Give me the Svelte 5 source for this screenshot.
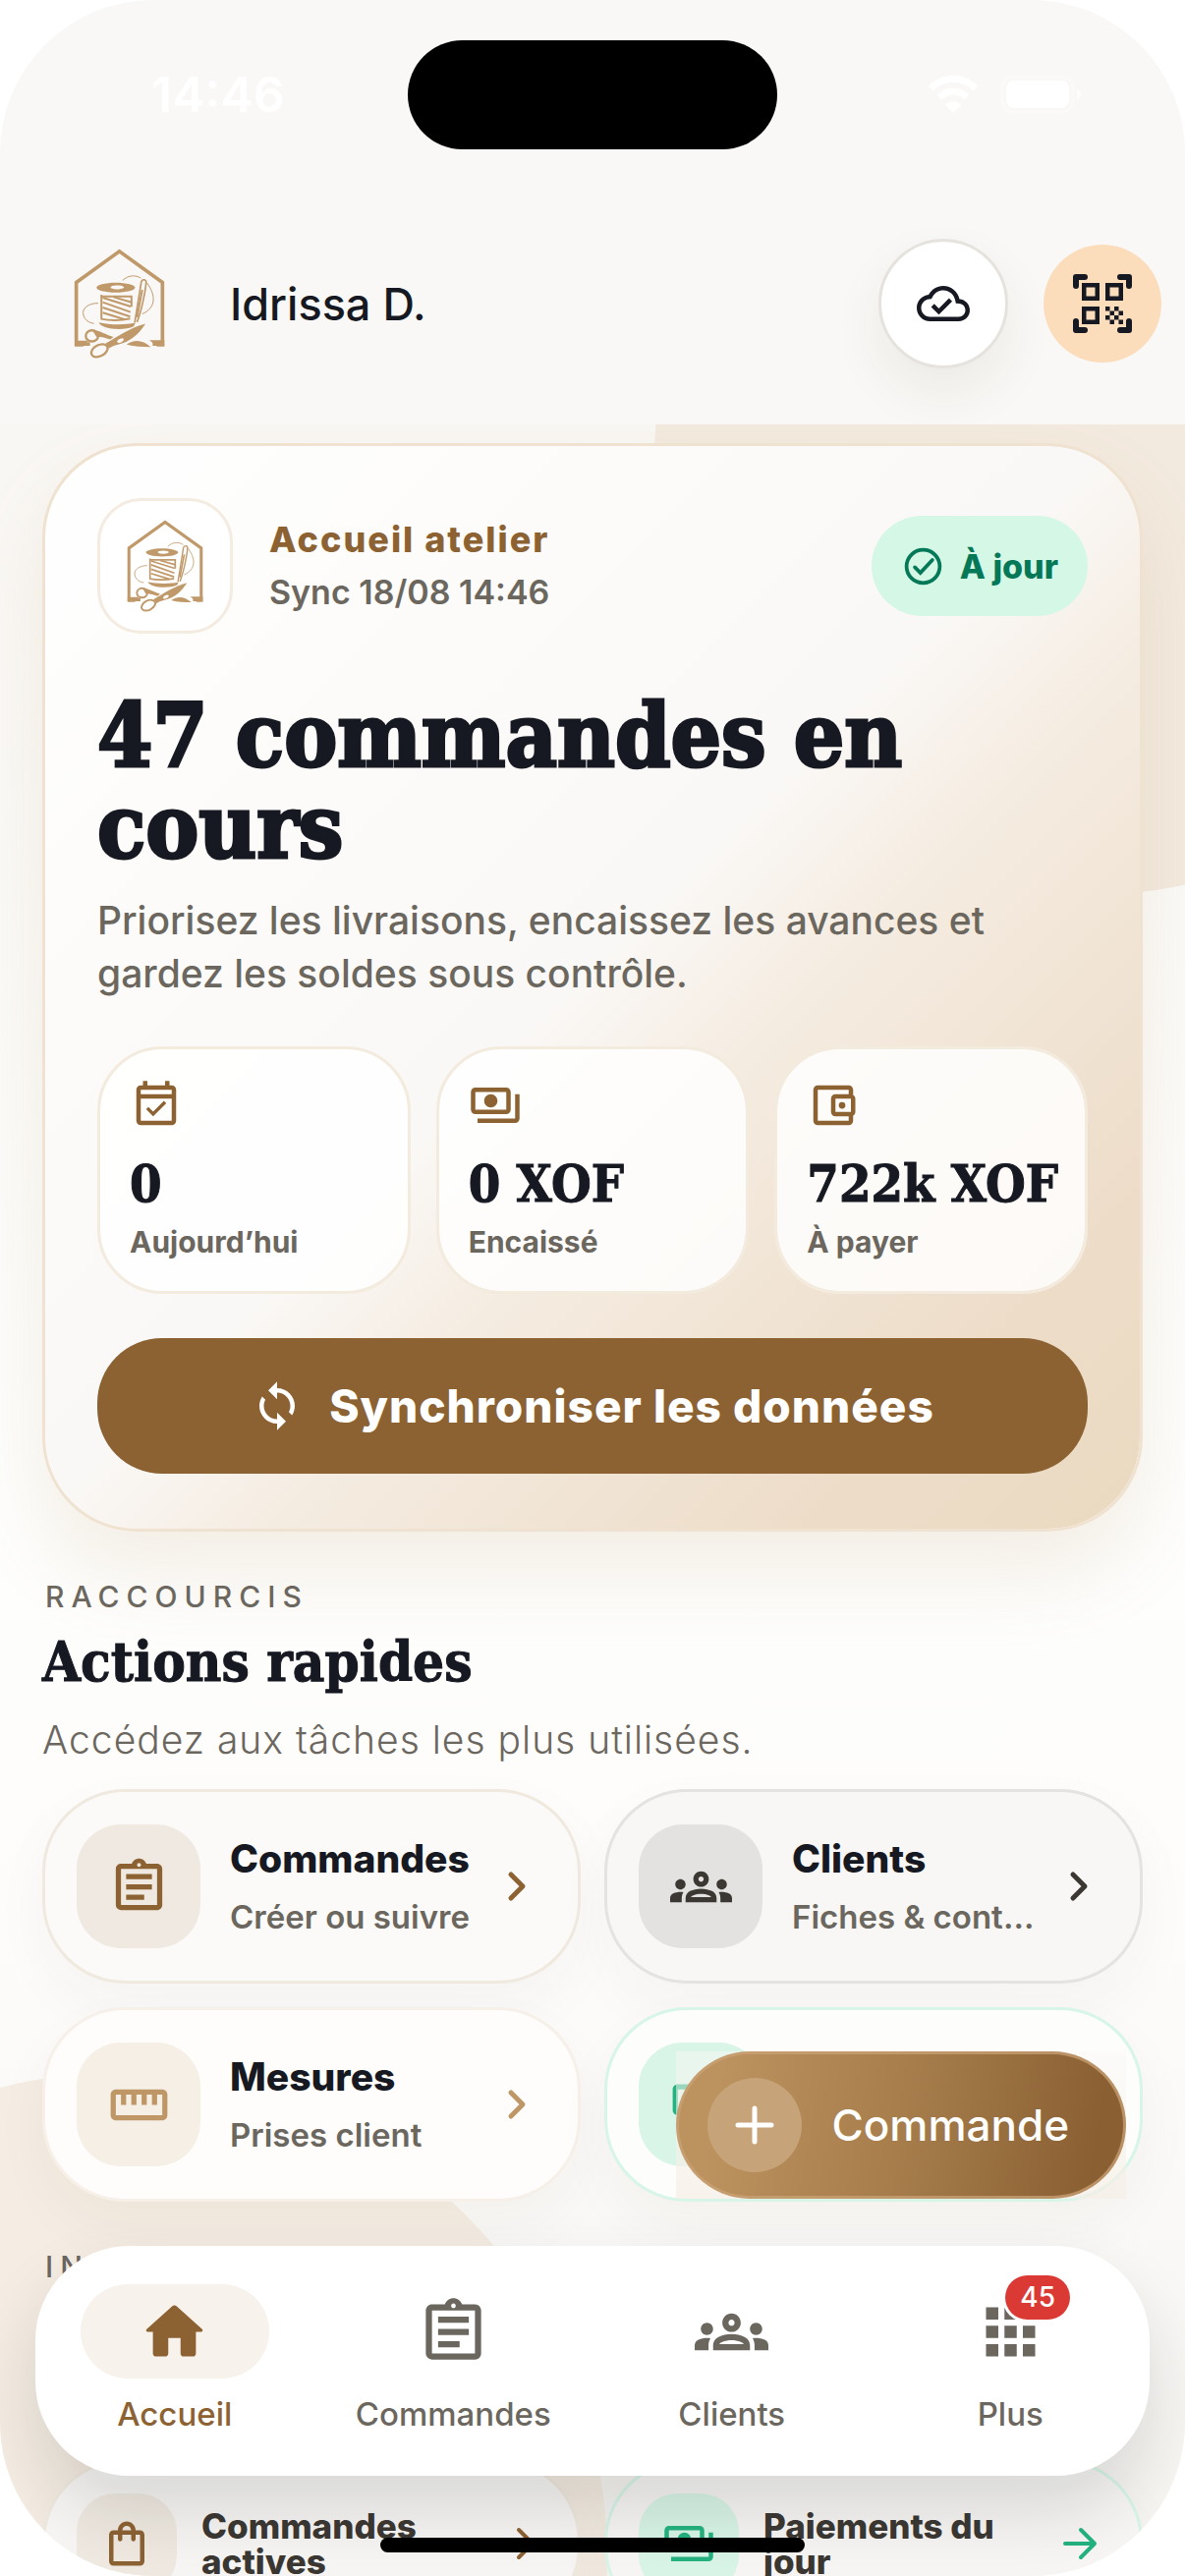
<script>
  const icons = {
    cloud: 'M19.35 10.04C18.67 6.59 15.64 4 12 4 9.11 4 6.6 5.64 5.35 8.04 2.34 8.36 0 10.91 0 14c0 3.31 2.69 6 6 6h13c2.76 0 5-2.24 5-5 0-2.64-2.05-4.78-4.65-4.96zM19 18H6c-2.21 0-4-1.79-4-4 0-2.05 1.53-3.76 3.56-3.97l1.07-.11.5-.95C8.08 7.14 9.94 6 12 6c2.62 0 4.88 1.86 5.39 4.43l.3 1.5 1.53.11c1.56.1 2.78 1.41 2.78 2.96 0 1.65-1.35 3-3 3zm-9-3.82l-2.09-2.09L6.5 13.5 10 17l6.01-6.01-1.41-1.41z',
    clipboard: 'M7 15h7v2H7zm0-4h10v2H7zm0-4h10v2H7zm12-4h-4.18C14.4 1.84 13.3 1 12 1c-1.3 0-2.4.84-2.82 2H5c-.14 0-.27.01-.4.04-.39.08-.74.28-1.01.55-.18.18-.33.4-.43.64-.1.23-.16.49-.16.77v14c0 .27.06.54.16.78s.25.45.43.64c.27.27.62.47 1.01.55.13.02.26.03.4.03h14c1.1 0 2-.9 2-2V5c0-1.1-.9-2-2-2zm-7-.25c.41 0 .75.34.75.75s-.34.75-.75.75-.75-.34-.75-.75.34-.75.75-.75zM19 19H5V5h14v14z',
    groups: 'M4 13c1.1 0 2-.9 2-2s-.9-2-2-2-2 .9-2 2 .9 2 2 2zM5.13 14.1C4.76 14.04 4.39 14 4 14c-.99 0-1.93.21-2.78.58C.48 14.9 0 15.62 0 16.43V18h4.5v-1.61c0-.83.23-1.61.63-2.29zM20 13c1.1 0 2-.9 2-2s-.9-2-2-2-2 .9-2 2 .9 2 2 2zM24 16.43c0-.81-.48-1.53-1.22-1.85C21.93 14.21 20.99 14 20 14c-.39 0-.76.04-1.13.1.4.68.63 1.46.63 2.29V18H24v-1.57zM16.24 13.65c-1.17-.52-2.61-.9-4.24-.9s-3.07.39-4.24.9C6.68 14.13 6 15.21 6 16.39V18h12v-1.61c0-1.18-.68-2.26-1.76-2.74zM8.07 16c.09-.23.13-.39.91-.69.97-.38 1.99-.56 3.02-.56s2.05.18 3.02.56c.77.3.81.46.91.69H8.07zM12 8c.55 0 1 .45 1 1s-.45 1-1 1-1-.45-1-1 .45-1 1-1m0-2c-1.66 0-3 1.34-3 3s1.34 3 3 3 3-1.34 3-3-1.34-3-3-3z',
    ruler: 'M21 6H3c-1.1 0-2 .9-2 2v8c0 1.1.9 2 2 2h18c1.1 0 2-.9 2-2V8c0-1.1-.9-2-2-2zm0 10H3V8h2v4h2V8h2v4h2V8h2v4h2V8h2v4h2V8h2v8z',
    payments: 'M19 14V6c0-1.1-.9-2-2-2H3c-1.1 0-2 .9-2 2v8c0 1.1.9 2 2 2h14c1.1 0 2-.9 2-2zm-2 0H3V6h14v8zm-7-7c-1.66 0-3 1.34-3 3s1.34 3 3 3 3-1.34 3-3-1.34-3-3-3zm13 0v11c0 1.1-.9 2-2 2H4v-2h17V7h2z',
    calendar: 'M16.53 11.06L15.47 10l-4.88 4.88-2.12-2.12-1.06 1.06L10.59 17l5.94-5.94zM19 3h-1V1h-2v2H8V1H6v2H5c-1.11 0-1.99.9-1.99 2L3 19c0 1.1.89 2 2 2h14c1.1 0 2-.9 2-2V5c0-1.1-.9-2-2-2zm0 16H5V9h14v10zM5 7V5h14v2H5z',
    wallet: 'M21 7.28V5c0-1.1-.9-2-2-2H5c-1.11 0-2 .9-2 2v14c0 1.1.89 2 2 2h14c1.1 0 2-.9 2-2v-2.28c.59-.35 1-.98 1-1.72V9c0-.74-.41-1.37-1-1.72zM20 9v6h-7V9h7zM5 19V5h14v2h-6c-1.1 0-2 .9-2 2v6c0 1.1.9 2 2 2h6v2H5zM16 10.5a1.5 1.5 0 1 0 0 3 1.5 1.5 0 0 0 0-3z',
    sync: 'M12 4V1L8 5l4 4V6c3.31 0 6 2.69 6 6 0 1.01-.25 1.97-.7 2.8l1.46 1.46C19.54 15.03 20 13.57 20 12c0-4.42-3.58-8-8-8zm0 14c-3.31 0-6-2.69-6-6 0-1.01.25-1.97.7-2.8L5.24 7.74C4.46 8.97 4 10.43 4 12c0 4.42 3.58 8 8 8v3l4-4-4-4v3z',
    home: 'M10 19v-5h4v5c0 .55.45 1 1 1h3c.55 0 1-.45 1-1v-7h1.7c.46 0 .68-.57.33-.87L12.67 3.6c-.38-.34-.96-.34-1.34 0l-8.36 7.53c-.34.3-.13.87.33.87H5v7c0 .55.45 1 1 1h3c.55 0 1-.45 1-1z',
    apps: 'M4 8h4V4H4v4zm6 12h4v-4h-4v4zm-6 0h4v-4H4v4zm0-6h4v-4H4v4zm6 0h4v-4h-4v4zm6-10v4h4V4h-4zm-6 4h4V4h-4v4zm6 6h4v-4h-4v4zm0 6h4v-4h-4v4z',
    bag: 'M18 6h-2c0-2.21-1.79-4-4-4S8 3.79 8 6H6c-1.1 0-2 .9-2 2v12c0 1.1.9 2 2 2h12c1.1 0 2-.9 2-2V8c0-1.1-.9-2-2-2zm-6-2c1.1 0 2 .9 2 2h-4c0-1.1.9-2 2-2zm6 16H6V8h2v2c0 .55.45 1 1 1s1-.45 1-1V8h4v2c0 .55.45 1 1 1s1-.45 1-1V8h2v12z'
  }

  const metrics = [
    { icon: 'calendar', value: '0', label: 'Aujourd’hui' },
    { icon: 'payments', value: '0 XOF', label: 'Encaissé' },
    { icon: 'wallet', value: '722k XOF', label: 'À payer' }
  ]

  const actions = [
    { tone: 'brown', icon: 'clipboard', title: 'Commandes', sub: 'Créer ou suivre' },
    { tone: 'dark', icon: 'groups', title: 'Clients', sub: 'Fiches & contacts' },
    { tone: 'sand', icon: 'ruler', title: 'Mesures', sub: 'Prises client' },
    { tone: 'mint', icon: 'payments', title: 'Paiements', sub: 'Encaisser' }
  ]

  const stats = [
    { tone: 'brown', icon: 'bag', title: 'Commandes actives' },
    { tone: 'mint', icon: 'payments', title: 'Paiements du jour' }
  ]

  const tabs = [
    { id: 'home', icon: 'home', label: 'Accueil' },
    { id: 'orders', icon: 'clipboard', label: 'Commandes' },
    { id: 'clients', icon: 'groups', label: 'Clients' },
    { id: 'more', icon: 'apps', label: 'Plus', badge: 45 }
  ]

  let current = $state('home')
</script>

{#snippet icon(name)}
  <svg class="icon" viewBox="0 0 24 24" fill="currentColor" aria-hidden="true">
    <path d={icons[name]} />
  </svg>
{/snippet}

{#snippet logo()}
  <svg class="logo" viewBox="28 28 280 336" fill="none" stroke="#c0996a" aria-hidden="true">
    <path d="M78 320H36V131L168 36l132 95v189h-30" stroke-width="11" />
    <path d="M31 328v-18h42l-16 18zM306 328v-20h-46l24 20z" fill="#c0996a" stroke="none" />
    <path fill="#c0996a" stroke="none" fill-rule="evenodd" d="M157 132c33 0 59 7 59 15s-26 15-59 15-59-7-59-15 26-15 59-15zm4 8c-12 0-20 3-20 6s8 6 20 6 21-3 21-6-9-6-21-6z" />
    <path d="M113 169v74M111 174h94v32M111 243c28 5 62 5 90-1" stroke-width="6" />
    <path d="M117 178l86 27M117 192l85 30M117 208l84 28M117 224l66 20M150 176l56 16" stroke-width="6" />
    <path d="M105 254c30 7 78 9 112 1l-5 11c-12 6-28 8-46 8-34 0-56-8-61-20z" fill="#c0996a" stroke="none" />
    <path d="M215 254l20-124c2-10 16-9 15 1-2 26-14 88-28 122" stroke-width="5" />
    <path d="M222 238l16-84" stroke-width="6" />
    <path d="M178 125c18-17 40-17 56-7M252 132c27 36 31 76-14 96" stroke-width="3" />
    <path d="M103 195c-30-1-52 17-45 37 5 16 18 23 32 25" stroke-width="3" />
    <ellipse cx="84" cy="295" rx="19" ry="17" stroke-width="7" />
    <path d="M84 276c24 2 42 16 66 22l-10 8c-16-5-30-9-42-8z" fill="#c0996a" stroke="none" />
    <ellipse cx="107" cy="340" rx="27" ry="17" transform="rotate(-28 107 340)" stroke-width="7" />
    <path fill="#c0996a" stroke="none" fill-rule="evenodd" d="M126 318c40-22 74-48 122-60-20 32-48 56-82 63-12 3-20 6-30 12zm36-8c-4 6 4 9 12 4 8-4 10-10 4-12-6 0-13 3-16 8z" />
    <path d="M190 322c24-18 50-14 74 7-26 0-48 0-74-7z" fill="#c0996a" stroke="none" />
  </svg>
{/snippet}

{#snippet heading(label, title, sub)}
  <p class="overline">{label}</p>
  <h2>{title}</h2>
  <p class="section-sub">{sub}</p>
{/snippet}

<div class="screen">
  <div class="island"></div>

  <div class="status-bar">
    <span class="time">14:46</span>
    <div class="status-icons">
      <svg width="52" height="39" viewBox="0 0 52 39" fill="none" stroke="#fff" stroke-width="7" aria-hidden="true">
        <path d="M3 13C16 0 36 0 49 13" />
        <path d="M12 22c8-8 20-8 28 0" />
        <path d="M26 38l-8-8c4-5 12-5 16 0z" fill="#fff" stroke="none" />
      </svg>
      <svg width="82" height="40" viewBox="0 0 82 40" aria-hidden="true">
        <rect x="2" y="2" width="72" height="36" rx="12" fill="none" stroke="#fbfaf9" stroke-width="3" />
        <rect x="6" y="6" width="64" height="28" rx="8" fill="#fff" />
        <path d="M78 14c5 3 5 9 0 12z" fill="#fdfdfc" />
      </svg>
    </div>
  </div>

  <header>
    {@render logo()}
    <span class="user">Idrissa D.</span>
    <button class="round cloud" aria-label="Synchronisation">{@render icon('cloud')}</button>
    <button class="round scan" aria-label="Scanner">
      <svg viewBox="0 0 24 24" aria-hidden="true">
        <path fill="currentColor" d="M9.5 6.5v3h-3v-3h3M11 5H5v6h6V5zM9.5 14.5v3h-3v-3h3M11 13H5v6h6v-6zM17.5 6.5v3h-3v-3h3M19 5h-6v6h6V5zM13 13h1.5v1.5H13zM14.5 14.5H16V16h-1.5zM16 13h1.5v1.5H16zM13 16h1.5v1.5H13zM14.5 17.5H16V19h-1.5zM16 16h1.5v1.5H16zM17.5 14.5H19V16h-1.5zM17.5 17.5H19V19h-1.5z" />
        <path fill="none" stroke="currentColor" stroke-width="2" stroke-linecap="round" stroke-linejoin="round" d="M3 6V3h3M18 3h3v3M21 18v3h-3M6 21H3v-3" />
      </svg>
    </button>
  </header>

  <main>
    <div class="blob top"></div>
    <div class="blob bottom"></div>

    <section class="hero">
      <div class="hero-top">
        <div class="logo-tile">{@render logo()}</div>
        <div class="hero-meta">
          <span class="hero-name">Accueil atelier</span>
          <span class="hero-sync">Sync 18/08 14:46</span>
        </div>
        <span class="chip">
          <svg viewBox="0 0 24 24" fill="none" stroke="currentColor" stroke-width="2" aria-hidden="true">
            <circle cx="12" cy="12" r="9" />
            <path d="M7.5 12.5l3 3 6.5-7" stroke-linecap="round" />
          </svg>
          À jour
        </span>
      </div>

      <h1>47 commandes en cours</h1>
      <p class="hero-text">Priorisez les livraisons, encaissez les avances et gardez les soldes sous contrôle.</p>

      <div class="metrics">
        {#each metrics as m}
          <div class="metric">
            {@render icon(m.icon)}
            <strong>{m.value}</strong>
            <span>{m.label}</span>
          </div>
        {/each}
      </div>

      <button class="sync-btn">
        {@render icon('sync')}
        Synchroniser les données
      </button>
    </section>

    <section class="block">
      {@render heading('RACCOURCIS', 'Actions rapides', 'Accédez aux tâches les plus utilisées.')}
      <div class="grid">
        {#each actions as a}
          <button class="action {a.tone}">
            <span class="badge-icon">{@render icon(a.icon)}</span>
            <span class="action-text">
              <span class="action-title">{a.title}</span>
              <span class="action-sub">{a.sub}</span>
            </span>
            <svg class="chevron" viewBox="0 0 60 60" fill="none" stroke="currentColor" stroke-width="5" stroke-linecap="round" stroke-linejoin="round" aria-hidden="true">
              <path d="M25 18l12 12-12 12" />
            </svg>
          </button>
        {/each}
      </div>
    </section>

    <section class="block">
      {@render heading('INDICATEURS', 'Aujourd’hui', 'Suivez votre activité.')}
      <div class="grid">
        {#each stats as s}
          <button class="action stat {s.tone}">
            <span class="badge-icon">{@render icon(s.icon)}</span>
            <span class="stat-title">{s.title}</span>
            <svg class="chevron" viewBox="0 0 60 60" fill="none" stroke="currentColor" stroke-width="4" stroke-linecap="round" stroke-linejoin="round" aria-hidden="true">
              <path d="M17 30h30M33 16l14 14-14 14" />
            </svg>
          </button>
        {/each}
      </div>
    </section>
  </main>

  <div class="fab-wrap">
    <button class="fab">
      <span class="fab-plus">
        <svg viewBox="0 0 54 54" fill="none" stroke="currentColor" stroke-width="5" stroke-linecap="round" aria-hidden="true">
          <path d="M27 10v34M10 27h34" />
        </svg>
      </span>
      Commande
    </button>
  </div>

  <nav>
    {#each tabs as tab}
      <a href="#{tab.id}" class:active={current === tab.id} onclick={() => (current = tab.id)}>
        <span class="pill">
          {@render icon(tab.icon)}
          {#if tab.badge}<span class="count">{tab.badge}</span>{/if}
        </span>
        {tab.label}
      </a>
    {/each}
  </nav>

  <div class="home-bar"></div>
</div>

<style>
  :global(body) {
    background: #fff;
  }

  .screen {
    position: relative;
    display: flex;
    flex-direction: column;
    height: 100vh;
    overflow: hidden;
    border-radius: 156px;
    background: #f9f8f6;
    color: #171922;
    font-family: Inter, 'Liberation Sans', sans-serif;
  }

  button {
    margin: 0;
    padding: 0;
    border: none;
    font-family: inherit;
    color: inherit;
    text-align: left;
    cursor: pointer;
  }

  h1, h2, p { margin: 0; }
  svg { display: block; flex-shrink: 0; }

  .island {
    position: absolute;
    top: 41px;
    left: 50%;
    width: 376px;
    height: 111px;
    border-radius: 56px;
    background: #000;
    transform: translateX(-50%);
  }

  .status-bar {
    display: flex;
    align-items: center;
    justify-content: space-between;
    flex-shrink: 0;
    height: 192px;
    padding: 0 106px 0 154px;
    box-sizing: border-box;
    color: #fff;
  }

  .time { font-size: 50px; font-weight: 600; }
  .status-icons { display: flex; align-items: center; gap: 22px; }

  header {
    display: flex;
    align-items: center;
    flex-shrink: 0;
    height: 240px;
    padding: 0 24px 6px 75px;
    box-sizing: border-box;
  }

  header .logo { width: 93px; height: 112px; }

  .user {
    flex: 1;
    margin-left: 66px;
    font-size: 45px;
    font-weight: 500;
  }

  .round {
    display: flex;
    align-items: center;
    justify-content: center;
    border-radius: 50%;
    box-sizing: border-box;
    color: #171922;
  }

  .cloud {
    width: 132px;
    height: 132px;
    margin-right: 36px;
    border: 3px solid #e6e3df;
    background: #fff;
    box-shadow: 0 24px 54px rgba(60, 50, 30, 0.07);
  }

  .cloud :global(.icon) { width: 54px; height: 54px; }
  .scan { width: 120px; height: 120px; background: #fbddbc; }
  .scan svg { width: 72px; height: 72px; }

  main {
    position: relative;
    flex: 1;
    min-height: 0;
    overflow: hidden;
    padding: 19px 43px;
    background: linear-gradient(180deg, #f9f7f4 0%, #fbfaf8 20%, #fefefd 50%, #fdfcfb 70%, #f7f6f3 95%);
  }

  .blob {
    position: absolute;
    border-radius: 50%;
    background: #f3eadf;
  }

  .blob.top { top: -409px; right: -348px; width: 888px; height: 888px; }
  .blob.bottom { top: 1677px; left: -370px; width: 988px; height: 988px; background: #f5ede3; }

  .hero, .block { position: relative; }

  .hero {
    padding: 53px 53px 56px;
    border: 3px solid #f0e2d0;
    border-radius: 96px;
    background: linear-gradient(135deg, #fff 0%, #fcfbf9 28%, #faf8f6 49%, #f5ece1 60%, #f1e5d6 71%, #eddcc8 85%, #ebdac1 100%);
    background-clip: padding-box;
    box-shadow: 0 42px 84px rgba(165, 120, 60, 0.12);
  }

  .hero-top { display: flex; align-items: center; }

  .logo-tile {
    display: flex;
    align-items: center;
    justify-content: center;
    width: 138px;
    height: 138px;
    box-sizing: border-box;
    border: 3px solid #f4ece1;
    border-radius: 45px;
    background: #fff;
  }

  .logo-tile .logo { width: 78px; height: 94px; }

  .hero-meta {
    display: flex;
    flex: 1;
    flex-direction: column;
    gap: 12px;
    margin-left: 37px;
  }

  .hero-name {
    color: #8c6233;
    font-size: 36px;
    font-weight: 800;
    line-height: 42px;
    letter-spacing: 2px;
  }

  .hero-sync {
    color: #6b675f;
    font-size: 34px;
    font-weight: 600;
    line-height: 42px;
  }

  .chip {
    display: flex;
    align-items: center;
    gap: 15px;
    height: 102px;
    padding: 0 30px;
    border-radius: 51px;
    background: #d5f7e6;
    color: #047857;
    font-size: 34px;
    font-weight: 800;
  }

  .chip svg { width: 45px; height: 45px; }

  h1, h2, .metric strong {
    font-family: 'DejaVu Serif Condensed', 'DejaVu Serif', serif;
    font-weight: 700;
    -webkit-text-stroke: 1px currentColor;
  }

  h1 {
    margin-top: 57px;
    font-size: 90px;
    line-height: 93px;
    -webkit-text-stroke-width: 3px;
  }

  .hero-text {
    margin-top: 22px;
    color: #6b675f;
    font-size: 39px;
    font-weight: 500;
    line-height: 54px;
  }

  .metrics {
    display: grid;
    grid-template-columns: repeat(3, minmax(0, 1fr));
    gap: 26px;
    margin-top: 47px;
  }

  .metric {
    display: flex;
    flex-direction: column;
    height: 252px;
    padding: 30px;
    box-sizing: border-box;
    border: 3px solid #f4ebdf;
    border-radius: 66px;
    background: rgba(255, 255, 255, 0.84);
    background-clip: padding-box;
    white-space: nowrap;
  }

  .metric :global(.icon) { width: 54px; height: 54px; color: #8c6233; }
  .metric strong { margin-top: 23px; font-size: 52px; line-height: 60px; }

  .metric span {
    margin-top: 11px;
    color: #6b675f;
    font-size: 30px;
    font-weight: 700;
    line-height: 36px;
  }

  .sync-btn {
    display: flex;
    align-items: center;
    justify-content: center;
    gap: 26px;
    width: 100%;
    height: 138px;
    margin-top: 45px;
    border-radius: 66px;
    background: #8c6233;
    color: #fff;
    font-size: 46px;
    font-weight: 800;
    letter-spacing: 1px;
  }

  .sync-btn :global(.icon) { width: 54px; height: 54px; }

  .block { margin-top: 48px; }

  .overline {
    margin-left: 3px;
    color: #6b675f;
    font-size: 30px;
    font-weight: 500;
    line-height: 36px;
    letter-spacing: 7px;
  }

  h2 { margin-top: 15px; font-size: 56px; line-height: 66px; }

  .section-sub {
    margin-top: 20px;
    color: #6b675f;
    font-size: 39px;
    font-weight: 300;
    line-height: 54px;
    letter-spacing: 1px;
  }

  .grid {
    display: grid;
    grid-template-columns: repeat(2, minmax(0, 1fr));
    gap: 24px;
    margin-top: 23px;
  }

  .action {
    display: flex;
    align-items: center;
    height: 198px;
    padding: 0 33px 0 32px;
    border: 3px solid;
    border-radius: 84px;
    box-shadow: 0 24px 60px rgba(60, 50, 30, 0.04);
  }

  .badge-icon {
    display: flex;
    align-items: center;
    justify-content: center;
    flex-shrink: 0;
    width: 126px;
    height: 126px;
    border-radius: 45px;
  }

  .badge-icon :global(.icon) { width: 63px; height: 63px; }

  .action-text {
    display: flex;
    flex: 1;
    flex-direction: column;
    gap: 15px;
    min-width: 0;
    margin: 0 12px 0 30px;
  }

  .action-title { color: #171922; font-size: 39px; font-weight: 800; line-height: 46px; }

  .action-sub {
    overflow: hidden;
    color: #6b675f;
    font-size: 33px;
    font-weight: 600;
    line-height: 42px;
    text-overflow: ellipsis;
    white-space: nowrap;
  }

  .chevron { width: 60px; height: 60px; }

  .brown { border-color: #f0e9df; background: #fbfaf8; color: #8c6233; }
  .brown .badge-icon { background: #efe9e1; }
  .dark { border-color: #e4e3e1; background: #f8f7f5; color: #3b3733; }
  .dark .badge-icon { background: #e3e2e0; }
  .sand { border-color: #f6f0e9; background: #fefdfb; color: #bf9767; }
  .sand .badge-icon { background: #f5efe5; }
  .mint { border-color: #d7f5e8; background: #fdfefc; color: #24b380; }
  .mint .badge-icon { background: #d8f5e7; }

  .stat { height: 172px; background: #f7f6f4; }
  .stat .badge-icon { width: 102px; height: 102px; border-radius: 39px; }
  .stat .badge-icon :global(.icon) { width: 54px; height: 54px; }

  .stat-title {
    flex: 1;
    margin: 0 12px 0 25px;
    color: #3b3733;
    font-size: 35px;
    font-weight: 800;
    line-height: 36px;
  }

  .fab-wrap {
    position: absolute;
    right: 60px;
    bottom: 384px;
    overflow: hidden;
    background: linear-gradient(180deg, rgba(250, 248, 246, 0.5) 0%, rgba(245, 238, 229, 0.7) 100%);
  }

  .fab {
    display: flex;
    align-items: center;
    gap: 30px;
    height: 150px;
    padding: 0 55px 0 29px;
    border: 3px solid rgba(201, 162, 117, 0.75);
    border-radius: 75px;
    background: linear-gradient(100deg, #bc935f 10%, #a67d4b 50%, #8a6033 92%);
    background-origin: border-box;
    color: #fff;
    font-size: 44px;
    font-weight: 500;
  }

  .fab-plus {
    display: flex;
    align-items: center;
    justify-content: center;
    width: 96px;
    height: 96px;
    border-radius: 50%;
    background: #c6a378;
  }

  .fab-plus svg { width: 54px; height: 54px; }

  nav {
    position: absolute;
    right: 36px;
    bottom: 102px;
    left: 36px;
    display: grid;
    grid-template-columns: repeat(4, 1fr);
    height: 234px;
    border-radius: 96px;
    background: #fff;
    box-shadow: 0 36px 72px rgba(30, 30, 30, 0.14);
  }

  nav a {
    display: flex;
    flex-direction: column;
    align-items: center;
    gap: 15px;
    padding-top: 39px;
    color: #6b675f;
    font-size: 33px;
    font-weight: 500;
    line-height: 42px;
    text-decoration: none;
  }

  .pill {
    position: relative;
    display: flex;
    align-items: center;
    justify-content: center;
    width: 192px;
    height: 96px;
    border-radius: 48px;
  }

  .pill :global(.icon) { width: 75px; height: 75px; }
  nav a.active { color: #8c6233; }
  nav a.active .pill { background: #f7f2ec; }

  .count {
    position: absolute;
    top: -9px;
    left: 91px;
    padding: 0 15px;
    border-radius: 23px;
    background: #db3a34;
    box-shadow: 0 0 0 3px #fff;
    color: #fff;
    font-size: 28px;
    line-height: 45px;
  }

  .home-bar {
    position: absolute;
    bottom: 24px;
    left: 50%;
    width: 432px;
    height: 15px;
    border-radius: 8px;
    background: #000;
    transform: translateX(-50%);
  }
</style>
